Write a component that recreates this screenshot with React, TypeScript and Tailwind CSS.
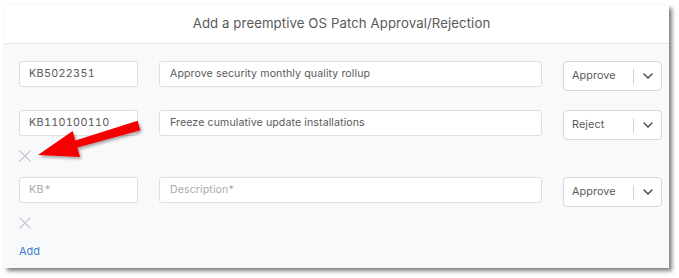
import React from "react";

function XIcon() {
  return (
    <svg width="12" height="12" viewBox="0 0 12 12" className="block">
      <path d="M0.5 0.5 L11.5 11.5 M11.5 0.5 L0.5 11.5" stroke="#c9cbcf" strokeWidth="1.3" fill="none" />
    </svg>
  );
}

function Chevron() {
  return (
    <svg width="10" height="6" viewBox="0 0 10 6" className="block">
      <path d="M1 1 L5 5 L9 1" stroke="#444" strokeWidth="1.4" fill="none" strokeLinecap="round" strokeLinejoin="round" />
    </svg>
  );
}

type Row = { kb: string; desc: string; action: string; removable: boolean };

const rows: Row[] = [
  { kb: "KB5022351", desc: "Approve security monthly quality rollup", action: "Approve", removable: false },
  { kb: "KB110100110", desc: "Freeze cumulative update installations", action: "Reject", removable: true },
  { kb: "", desc: "", action: "Approve", removable: true },
];

function PatchRow({ row, last }: { row: Row; last: boolean }) {
  return (
    <div className={row.removable ? (last ? "" : "mb-[15px]") : "mb-[19px]"}>
      <div className="flex items-start">
        <div className="w-[119px] h-[26px] bg-white border border-[#dcdfe4] rounded-[3px] flex items-center pl-[9px] text-[10.8px] tracking-[0.3px] tabular-nums text-[#5a5a5a]">
          {row.kb ? row.kb : <span className="text-[#a9abae]">KB*</span>}
        </div>
        <div className="ml-[21px] w-[383px] h-[26px] bg-white border border-[#dcdfe4] rounded-[3px] flex items-center pl-[10px] text-[10.6px] tracking-[0.1px] text-[#5a5a5a]">
          {row.desc ? row.desc : <span className="text-[#a9abae]">Description*</span>}
        </div>
        <div className="ml-[21px] w-[99px] h-[30px] bg-white border border-[#d6d9de] rounded-[4px] flex items-center text-[10.8px] tracking-[0.1px] text-[#5a5a5a]">
          <span className="pl-[8px] w-[69px]">{row.action}</span>
          <span className="w-px h-[15px] bg-[#d0d3d8]" />
          <span className="flex-1 flex justify-center">
            <Chevron />
          </span>
        </div>
      </div>
      {row.removable && (
        <div className="mt-[10px] h-[12px]">
          <XIcon />
        </div>
      )}
    </div>
  );
}

export default function App() {
  return (
    <div className="relative w-[679px] h-[278px] bg-white overflow-hidden" style={{ fontFamily: "Inter, 'Noto Sans', sans-serif" }}>
      <div className="absolute left-[4px] top-[5px] w-[665px] h-[263px] bg-[#f8f9fb] shadow-[3px_3px_4px_rgba(0,0,0,0.5)]">
        <div className="h-[39px] bg-white border-b border-[#e1e4e8] flex items-center justify-center pl-[10px] text-[13.2px] tracking-[0.1px] text-[#595959]">
          Add a preemptive OS Patch Approval/Rejection
        </div>
        <div className="pl-[15px] pt-[17px]">
          {rows.map((r, i) => (
            <PatchRow key={i} row={r} last={i === rows.length - 1} />
          ))}
          <div className="mt-[15px] text-[11px] text-[#3d7fcc] leading-[14px]">Add</div>
        </div>
      </div>
      <svg className="absolute left-0 top-0 pointer-events-none" width="679" height="278" viewBox="0 0 679 278">
        <defs>
          <filter id="sh" x="-20%" y="-20%" width="140%" height="140%">
            <feDropShadow dx="1.5" dy="2" stdDeviation="1.5" floodColor="#000" floodOpacity="0.35" />
          </filter>
        </defs>
        <polygon
          points="38,155 72.7,131 75.4,140.6 137.6,120.7 140.4,130.3 77.4,147.4 80.1,157"
          fill="#f40000"
          filter="url(#sh)"
        />
      </svg>
    </div>
  );
}
